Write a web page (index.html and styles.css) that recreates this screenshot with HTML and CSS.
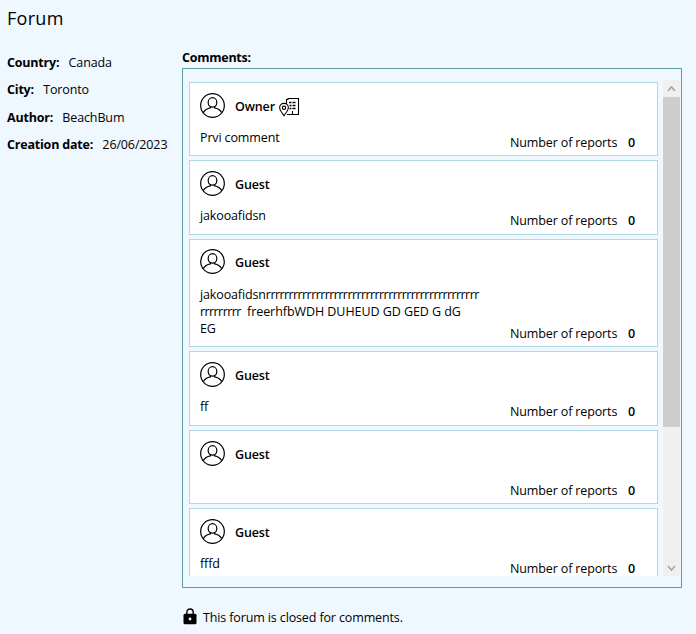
FILE: index.html
```html
<!DOCTYPE html>
<html lang="en">
<head>
<meta charset="utf-8">
<title>Forum</title>
<link rel="stylesheet" href="styles.css">
</head>
<body>
<svg class="defs" width="0" height="0">
  <symbol id="user" viewBox="0 0 26 26">
    <g fill="none" stroke="#000" stroke-width="1.25">
      <circle cx="13" cy="13" r="12.3"/>
      <ellipse cx="13" cy="9.800" rx="4.500" ry="4.900"/>
      <path d="M3.200 20.500C5 17.600 7.600 16 10.800 15.400v-1.400M22.800 20.500c-1.800-2.900-4.400-4.500-7.600-5.100v-1.400"/>
    </g>
  </symbol>
</svg>
<h1 class="title">Forum</h1>
<main class="layout">
  <dl class="info">
    <div class="row"><dt>Country:</dt><dd>Canada</dd></div>
    <div class="row"><dt>City:</dt><dd>Toronto</dd></div>
    <div class="row"><dt>Author:</dt><dd>BeachBum</dd></div>
    <div class="row"><dt>Creation date:</dt><dd>26/06/2023</dd></div>
  </dl>
  <section class="comments">
    <h2 class="heading">Comments:</h2>
    <div class="frame">
      <div class="list">
        <article class="card">
          <header class="who"><svg class="avatar"><use href="#user"/></svg><b>Owner</b>
            <svg class="place" viewBox="0 0 21 20"><g fill="none" stroke="#000" stroke-width="1.100"><path d="M7.500 7V2.500h1.500V1.500h10.500v16H8M13.500 17.500v-3.500M5 18.800C3 15.500.600 13.500.600 10.800a4.400 4.400 0 0 1 8.800 0C9.400 13.500 7 15.500 5 18.800z"/><circle cx="5" cy="10.800" r="1.700"/><path d="M10 5.500h2.500m1 0h3m-6 3h2m1 0h3m-6 3h2m1 0h3" stroke-width="1.300"/></g></svg>
          </header>
          <div class="body"><p class="text">Prvi comment</p><div class="reports"><span>Number of reports</span><b>0</b></div></div>
        </article>
        <article class="card odd">
          <header class="who"><svg class="avatar"><use href="#user"/></svg><b>Guest</b></header>
          <div class="body"><p class="text">jakooafidsn</p><div class="reports"><span>Number of reports</span><b>0</b></div></div>
        </article>
        <article class="card tall">
          <header class="who"><svg class="avatar"><use href="#user"/></svg><b>Guest</b></header>
          <div class="body"><p class="text">jakooafidsn<span class="run">rrrrrrrrrrrrrrrrrrrrrrrrrrrrrrrrrrrrrrrrrrrrrrr</span><br><span class="run">rrrrrrrrr</span>&nbsp; <span class="caps">freerhfbWDH DUHEUD GD GED G dG</span><br>EG</p><div class="reports"><span>Number of reports</span><b>0</b></div></div>
        </article>
        <article class="card odd">
          <header class="who"><svg class="avatar"><use href="#user"/></svg><b>Guest</b></header>
          <div class="body"><p class="text">ff</p><div class="reports"><span>Number of reports</span><b>0</b></div></div>
        </article>
        <article class="card">
          <header class="who"><svg class="avatar"><use href="#user"/></svg><b>Guest</b></header>
          <div class="body"><p class="text"></p><div class="reports"><span>Number of reports</span><b>0</b></div></div>
        </article>
        <article class="card">
          <header class="who"><svg class="avatar"><use href="#user"/></svg><b>Guest</b></header>
          <div class="body"><p class="text">fffd</p><div class="reports"><span>Number of reports</span><b>0</b></div></div>
        </article>
      </div>
      <div class="scrollbar">
        <svg class="arrow" viewBox="0 0 17 17"><path d="M5 11l3.500-4 3.500 4"/></svg>
        <div class="thumb"></div>
        <svg class="arrow end" viewBox="0 0 17 17"><path d="M5 7l3.500 4L12 7"/></svg>
      </div>
    </div>
    <footer class="closed">
      <svg class="lock" viewBox="0 0 14 17"><path d="M3.800 7V4.200a3.200 3.200 0 0 1 6.400 0V7" fill="none" stroke="#000" stroke-width="1.400"/><rect x=".5" y="5.800" width="13" height="10.500" rx="1.500"/><circle cx="7" cy="11" r="1.400" fill="#f0f8ff"/></svg>
      <span>This forum is closed for comments.</span>
    </footer>
  </section>
</main>
</body>
</html>
```
FILE: styles.css
```css
* { box-sizing: border-box; margin: 0; padding: 0; }
body {
  width: 696px;
  height: 634px;
  overflow: hidden;
  background: #f0f8ff;
  color: #000;
  font: 12.5px/17px "Open Sans", "Noto Sans", sans-serif;
  letter-spacing: -0.13px;
  padding: 6px 0 0 7px;
}
.defs { display: block; height: 0; }
.title { font-size: 18px; font-weight: 400; line-height: 25px; letter-spacing: 0.3px; }
.layout { display: flex; margin-top: 18px; }
.info { width: 175px; padding-top: 5px; flex: none; }
.row { display: flex; height: 27.4px; white-space: nowrap; }
.row dt { font-weight: 700; letter-spacing: -0.2px; margin-right: 9.3px; }
.heading { font-size: 12.5px; line-height: 17px; font-weight: 700; letter-spacing: -0.25px; }
.comments { width: 500px; }
.frame {
  display: flex;
  height: 520px;
  margin-top: 2px;
  border: 1px solid #5f9ea0;
  padding: 11px 1px 11px 6px;
}
.list { width: 469px; height: 496px; padding-top: 2px; overflow: hidden; flex: none; }
.card {
  display: flex;
  flex-direction: column;
  height: 74px;
  margin-bottom: 4px;
  padding: 10px 10px 0;
  border: 1px solid #add8e6;
  background: #fff;
}
.card.odd { height: 75px; padding-bottom: 1px; }
.card.tall { height: 108px; padding-top: 9px; }
.who { display: flex; align-items: center; height: 26px; flex: none; }
.who b { font-weight: 600; margin-left: 10px; }
.avatar { width: 25px; height: 25px; margin-top: -1px; }
.place { width: 21px; height: 20px; margin-left: 4px; margin-top: 2px; }
.body { display: flex; flex: 1; justify-content: space-between; }
.text { width: 300px; padding-top: 10px; white-space: nowrap; }
.tall .text { padding-top: 11px; }
.run { letter-spacing: -0.58px; }
.caps { letter-spacing: -0.06px; }
.reports { display: flex; width: 137px; align-self: flex-end; padding-bottom: 4px; white-space: nowrap; }
.reports span { width: 118px; }
.reports b { font-weight: 600; }
.scrollbar { width: 17px; height: 496px; margin-left: 5px; background: #f0f0f0; display: flex; flex-direction: column; }
.arrow { width: 17px; height: 17px; flex: none; fill: none; stroke: #a3a3a3; stroke-width: 1.5; }
.thumb { height: 330px; background: #cdcdcd; }
.end { margin-top: auto; }
.closed { display: flex; align-items: center; margin-top: 19px; height: 18px; }
.lock { width: 14px; height: 17px; margin: 0 6px 0 1px; }
.closed span { padding-top: 2px; }
```
